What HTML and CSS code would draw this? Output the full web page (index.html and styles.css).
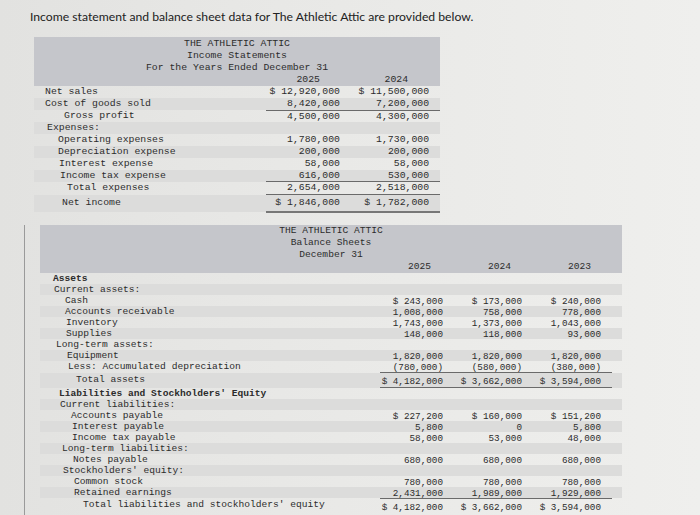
FILE: index.html
```html
<!DOCTYPE html>
<html lang="en">
<head>
<meta charset="utf-8">
<title>The Athletic Attic</title>
<link rel="stylesheet" href="styles.css">
</head>
<body>
<div class="page">
  <p class="intro">Income statement and balance sheet data for The Athletic Attic are provided below.</p>

  <table class="fin inc">
    <colgroup><col class="inc-lab"><col class="inc-c1"><col class="inc-c2"></colgroup>
    <thead>
      <tr><th colspan="3" class="ttl">THE ATHLETIC ATTIC</th></tr>
      <tr><th colspan="3" class="ttl">Income Statements</th></tr>
      <tr><th colspan="3" class="ttl">For the Years Ended December 31</th></tr>
      <tr><th></th><th class="yr">2025</th><th class="yr yr-last">2024</th></tr>
    </thead>
    <tbody>
      <tr><td class="lab i-0">Net sales</td><td class="num">$ 12,920,000</td><td class="num last">$ 11,500,000</td></tr>
      <tr class="ul"><td class="lab i-0">Cost of goods sold</td><td class="num">8,420,000</td><td class="num last">7,200,000</td></tr>
      <tr><td class="lab i-gp">Gross profit</td><td class="num">4,500,000</td><td class="num last">4,300,000</td></tr>
      <tr><td class="lab i-ex">Expenses:</td><td class="num"></td><td class="num last"></td></tr>
      <tr><td class="lab i-1">Operating expenses</td><td class="num">1,780,000</td><td class="num last">1,730,000</td></tr>
      <tr><td class="lab i-1">Depreciation expense</td><td class="num">200,000</td><td class="num last">200,000</td></tr>
      <tr><td class="lab i-1b">Interest expense</td><td class="num">58,000</td><td class="num last">58,000</td></tr>
      <tr class="ul"><td class="lab i-1c">Income tax expense</td><td class="num">616,000</td><td class="num last">530,000</td></tr>
      <tr class="ul tot"><td class="lab i-te">Total expenses</td><td class="num">2,654,000</td><td class="num last">2,518,000</td></tr>
      <tr class="dbl net"><td class="lab i-ni">Net income</td><td class="num">$ 1,846,000</td><td class="num last">$ 1,782,000</td></tr>
    </tbody>
  </table>

  <div class="edge">
  <table class="fin bs">
    <colgroup><col class="bs-lab"><col class="bs-c1"><col class="bs-c2"><col class="bs-c3"><col class="bs-sp"></colgroup>
    <thead>
      <tr><th colspan="5" class="ttl">THE ATHLETIC ATTIC</th></tr>
      <tr><th colspan="5" class="ttl">Balance Sheets</th></tr>
      <tr><th colspan="5" class="ttl">December 31</th></tr>
      <tr><th></th><th class="yr y1">2025</th><th class="yr y2">2024</th><th class="yr y3">2023</th><th></th></tr>
    </thead>
    <tbody>
      <tr><td class="lab b-as bold">Assets</td><td class="num"></td><td class="num"></td><td class="num n3"></td><td></td></tr>
      <tr><td class="lab b-ca">Current assets:</td><td class="num"></td><td class="num"></td><td class="num n3"></td><td></td></tr>
      <tr><td class="lab b-a1">Cash</td><td class="num">$ 243,000</td><td class="num">$ 173,000</td><td class="num n3">$ 240,000</td><td></td></tr>
      <tr><td class="lab b-a1">Accounts receivable</td><td class="num">1,008,000</td><td class="num">758,000</td><td class="num n3">778,000</td><td></td></tr>
      <tr><td class="lab b-a1b">Inventory</td><td class="num">1,743,000</td><td class="num">1,373,000</td><td class="num n3">1,043,000</td><td></td></tr>
      <tr><td class="lab b-a1b">Supplies</td><td class="num">148,000</td><td class="num">118,000</td><td class="num n3">93,000</td><td></td></tr>
      <tr><td class="lab b-lta">Long-term assets:</td><td class="num"></td><td class="num"></td><td class="num n3"></td><td></td></tr>
      <tr><td class="lab b-a2">Equipment</td><td class="num">1,820,000</td><td class="num">1,820,000</td><td class="num n3">1,820,000</td><td></td></tr>
      <tr class="ul"><td class="lab b-a2b">Less: Accumulated depreciation</td><td class="num">(780,000)</td><td class="num">(580,000)</td><td class="num n3">(380,000)</td><td></td></tr>
      <tr class="ul tot"><td class="lab b-ta">Total assets</td><td class="num">$ 4,182,000</td><td class="num">$ 3,662,000</td><td class="num n3">$ 3,594,000</td><td></td></tr>
      <tr><td class="lab b-li bold">Liabilities and Stockholders' Equity</td><td class="num"></td><td class="num"></td><td class="num n3"></td><td></td></tr>
      <tr><td class="lab b-cl">Current liabilities:</td><td class="num"></td><td class="num"></td><td class="num n3"></td><td></td></tr>
      <tr><td class="lab b-l1">Accounts payable</td><td class="num">$ 227,200</td><td class="num">$ 160,000</td><td class="num n3">$ 151,200</td><td></td></tr>
      <tr><td class="lab b-l1b">Interest payable</td><td class="num">5,800</td><td class="num">0</td><td class="num n3">5,800</td><td></td></tr>
      <tr><td class="lab b-l1b">Income tax payable</td><td class="num">58,000</td><td class="num">53,000</td><td class="num n3">48,000</td><td></td></tr>
      <tr><td class="lab b-ltl">Long-term liabilities:</td><td class="num"></td><td class="num"></td><td class="num n3"></td><td></td></tr>
      <tr><td class="lab b-np">Notes payable</td><td class="num">680,000</td><td class="num">680,000</td><td class="num n3">680,000</td><td></td></tr>
      <tr><td class="lab b-se">Stockholders' equity:</td><td class="num"></td><td class="num"></td><td class="num n3"></td><td></td></tr>
      <tr><td class="lab b-l2">Common stock</td><td class="num">780,000</td><td class="num">780,000</td><td class="num n3">780,000</td><td></td></tr>
      <tr class="ul"><td class="lab b-l2">Retained earnings</td><td class="num">2,431,000</td><td class="num">1,989,000</td><td class="num n3">1,929,000</td><td></td></tr>
      <tr class="tot"><td class="lab b-tl">Total liabilities and stockholders' equity</td><td class="num">$ 4,182,000</td><td class="num">$ 3,662,000</td><td class="num n3">$ 3,594,000</td><td></td></tr>
    </tbody>
  </table>
  </div>
</div>
</body>
</html>
```

FILE: styles.css
```css
html, body {
  margin: 0;
  padding: 0;
}

body {
  width: 700px;
  height: 515px;
  overflow: hidden;
  background: linear-gradient(90deg, #e2e2e0 0%, #e8e8e6 40%, #efefed 100%);
  color: #3a3a3a;
}

.page {
  padding: 9px 0 0 30px;
}

.intro {
  margin: 0;
  font-family: "Lato", "Liberation Sans", sans-serif;
  font-size: 12.2px;
  line-height: 15px;
  color: #222;
}

.fin {
  border-collapse: collapse;
  border-spacing: 0;
  font-family: "Liberation Mono", "Courier New", monospace;
  font-size: 9.8px;
  color: #2c2c2c;
  table-layout: fixed;
}

.fin th, .fin td {
  padding: 0;
  white-space: nowrap;
  font-weight: normal;
}

.fin thead tr {
  background: #c5c6cb;
}

.fin .ttl {
  text-align: center;
  line-height: 12px;
}

.fin .yr {
  text-align: right;
  line-height: 12px;
}

.fin tbody tr:nth-child(even) {
  background: #dcdcdb;
}

.fin .num {
  text-align: right;
}

.fin .bold {
  font-weight: bold;
}

/* ---------- Income statement ---------- */
.inc {
  margin: 13px 0 0 4px;
  width: 406px;
}

.inc thead tr:first-child th {
  padding-top: 1px;
}

.inc-lab { width: 232px; }
.inc-c1 { width: 78px; }
.inc-c2 { width: 96px; }

.inc .yr { padding-right: 24px; }
.inc .yr-last { padding-right: 32px; }

.inc tbody tr { height: 11.8px; }
.inc td { line-height: 11.8px; }

.inc .num { padding-right: 4px; }
.inc .num.last { padding-right: 11px; }

.inc tr.ul td.num { border-bottom: 1px solid #6a6a6a; }
.inc tbody tr.tot { height: 12px; }
.inc tbody tr.net { height: 16px; }
.inc tr.net td { line-height: 16px; }
.inc tr.dbl td.num { border-bottom: 2px solid #777; }

.inc .i-0 { padding-left: 11px; }
.inc .i-gp { padding-left: 30px; }
.inc .i-ex { padding-left: 13px; }
.inc .i-1 { padding-left: 24px; }
.inc .i-1b { padding-left: 25px; }
.inc .i-1c { padding-left: 26px; }
.inc .i-te { padding-left: 33px; }
.inc .i-ni { padding-left: 28px; }

/* ---------- Balance sheet ---------- */
.edge {
  margin: 12px 0 0 -6px;
  padding-left: 15px;
  border-left: 1px solid #9a9a9a;
  height: 300px;
}

.bs {
  width: 582px;
  font-size: 9.6px;
}

.bs-lab { width: 340px; }
.bs-c1 { width: 65px; }
.bs-c2 { width: 79px; }
.bs-c3 { width: 88px; }
.bs-sp { width: 10px; }

.bs .y1 { padding-right: 14px; }
.bs .y2 { padding-right: 13px; }
.bs .y3 { padding-right: 21px; }

.bs tbody tr { height: 11px; }
.bs td { line-height: 11px; }

.bs td.num {
  font-size: 9.3px;
  padding-right: 2px;
  padding-top: 3px;
  line-height: 8px;
  vertical-align: top;
}

.bs td.num.n3 { padding-right: 11px; }

.bs tr.ul td.num { border-bottom: 1px solid #6a6a6a; }
.bs tbody tr.tot { height: 14px; }
.bs tr.tot td { line-height: 14px; }
.bs tr.tot td.num { padding-top: 3px; line-height: 11px; }

.bs .b-as { padding-left: 13px; }
.bs .b-ca { padding-left: 14px; }
.bs .b-a1 { padding-left: 25px; }
.bs .b-a1b { padding-left: 26px; }
.bs .b-lta { padding-left: 16px; }
.bs .b-a2 { padding-left: 27px; }
.bs .b-a2b { padding-left: 28px; }
.bs .b-ta { padding-left: 36px; }
.bs .b-li { padding-left: 19px; }
.bs .b-cl { padding-left: 20px; }
.bs .b-l1 { padding-left: 31px; }
.bs .b-l1b { padding-left: 32px; }
.bs .b-ltl { padding-left: 22px; }
.bs .b-np { padding-left: 33px; }
.bs .b-se { padding-left: 23px; }
.bs .b-l2 { padding-left: 34px; }
.bs .b-tl { padding-left: 43px; }
```
